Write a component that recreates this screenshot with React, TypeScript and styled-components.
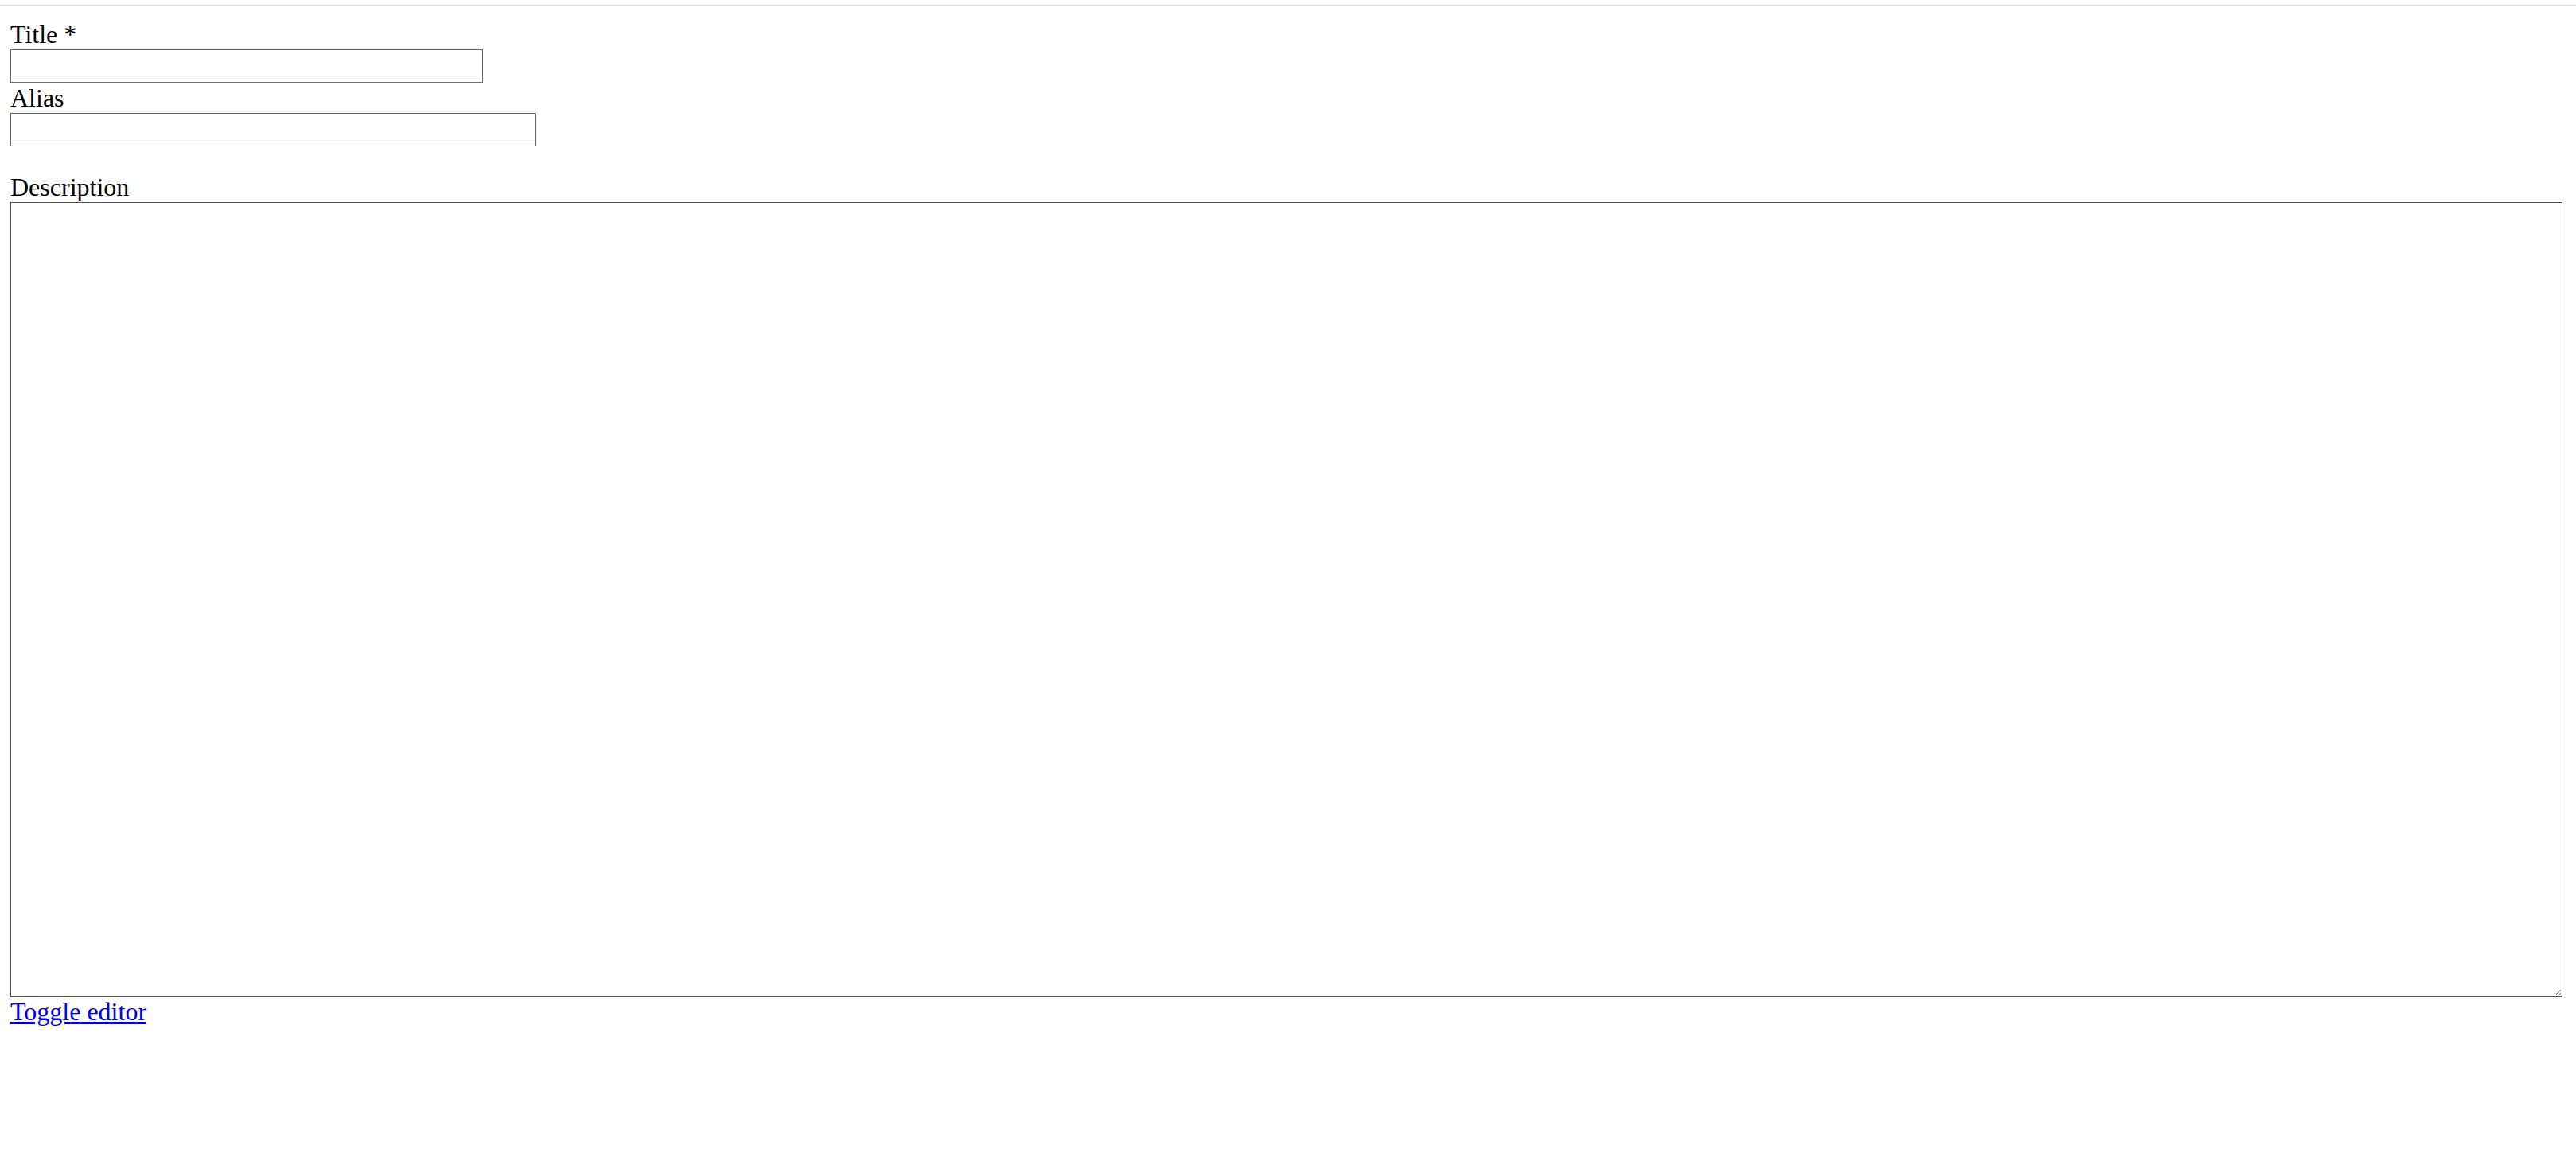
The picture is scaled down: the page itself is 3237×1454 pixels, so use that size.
import React from "react";
import styled, { createGlobalStyle } from "styled-components";

const GlobalStyle = createGlobalStyle`
  html, body {
    margin: 0;
    padding: 0;
    background: #ffffff;
  }
  body {
    font-family: "Liberation Serif", "Times New Roman", serif;
    font-size: 32px;
    color: #000000;
  }
`;

const Page = styled.div`
  width: 100%;
  box-sizing: border-box;
`;

const TopRule = styled.div`
  margin-top: 6px;
  height: 2px;
  width: 100%;
  background: #d9d9dd;
`;

const Form = styled.form`
  display: flex;
  flex-direction: column;
  align-items: flex-start;
  padding: 16px 17px 0 13px;
  margin: 0;
`;

const Field = styled.div<{ $gap?: number }>`
  display: flex;
  flex-direction: column;
  align-items: flex-start;
  width: 100%;
  margin-top: ${(p) => p.$gap ?? 0}px;
`;

const Label = styled.label`
  display: block;
  line-height: 38px;
  font-size: 32px;
`;

const TextInput = styled.input<{ $width: number }>`
  display: block;
  box-sizing: border-box;
  width: ${(p) => p.$width}px;
  height: 42px;
  margin: 0;
  padding: 2px 4px;
  border: 1px solid #6e6e6e;
  border-radius: 0;
  background: #ffffff;
  font-family: "Liberation Sans", Arial, sans-serif;
  font-size: 26px;
  outline: none;
`;

const TextArea = styled.textarea`
  display: block;
  box-sizing: border-box;
  width: 100%;
  height: 999px;
  margin: 0;
  padding: 4px;
  border: 1px solid #505050;
  border-radius: 0;
  background: #ffffff;
  resize: both;
  font-family: "Liberation Mono", monospace;
  font-size: 26px;
  outline: none;
`;

const ToggleLink = styled.a`
  display: inline-block;
  line-height: 36px;
  font-size: 32px;
  color: #0000ee;
  text-decoration: underline;
  cursor: pointer;
`;

export default function App() {
  return (
    <Page>
      <GlobalStyle />
      <TopRule />
      <Form onSubmit={(e) => e.preventDefault()}>
        <Field>
          <Label htmlFor="title">Title *</Label>
          <TextInput id="title" type="text" $width={594} />
        </Field>
        <Field>
          <Label htmlFor="alias">Alias</Label>
          <TextInput id="alias" type="text" $width={660} />
        </Field>
        <Field $gap={32}>
          <Label htmlFor="description">Description</Label>
          <TextArea id="description" />
          <ToggleLink href="#" onClick={(e) => e.preventDefault()}>
            Toggle editor
          </ToggleLink>
        </Field>
      </Form>
    </Page>
  );
}
